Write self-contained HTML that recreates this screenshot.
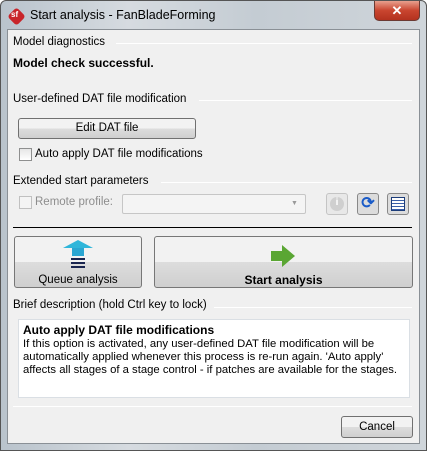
<!DOCTYPE html><html><head><style>
*{margin:0;padding:0;box-sizing:border-box}
body{width:427px;height:451px;overflow:hidden;font-family:"Liberation Sans",sans-serif;font-size:11.5px;color:#000;background:#fff}
.win{position:absolute;left:0;top:0;width:427px;height:451px;border:1px solid #555;border-radius:6px 6px 0 0;background:linear-gradient(to right,#b9c3cc,#d6dbe0 30%,#c4ccd3 60%,#cfd5da);}
.client{position:absolute;left:7px;top:29px;width:413px;height:415px;background:#f0f0f0;border:1px solid #8a9096}
.a{position:absolute;white-space:nowrap}
.line{position:absolute;height:1px;background:#a0a0a0;border-bottom:1px solid #fff}
.btn{position:absolute;border:1px solid #707070;border-radius:3px;background:linear-gradient(#f2f2f2 50%,#dddddd 50%,#cfcfcf);text-align:center}
.cb{position:absolute;width:13px;height:13px;border:1px solid #8e8f8f;background:linear-gradient(#e6e6e6,#fff)}
</style></head><body>
<div class="win">
<div class="a" style="transform:rotate(45deg);border-radius:3px;width:13px;height:13px;left:9px;top:9px;background:#c8252a"></div>
<div class="a" style="left:10px;top:9px;color:#fff;font-size:8px;font-weight:bold">sf</div>
<div class="a" style="left:29px;top:7px;font-size:12.5px">Start analysis - FanBladeForming</div>
<div class="a" style="left:373px;top:0;width:46px;height:20px;border:1px solid #6b3a33;border-top:none;border-radius:0 0 5px 5px;background:linear-gradient(#e8a08e,#c9452f 50%,#b3321f);color:#fff;font-weight:bold;font-size:13px;text-align:center;line-height:19px">✕</div>
</div>
<div class="client">
<div class="a" style="left:5px;top:6px">Model diagnostics</div>
<div class="line" style="left:108px;top:13px;width:296px"></div>
<div class="a" style="left:5px;top:26px;font-weight:bold;font-size:12px">Model check successful.</div>
<div class="a" style="left:5px;top:63px">User-defined DAT file modification</div>
<div class="line" style="left:191px;top:70px;width:213px"></div>
<div class="btn" style="left:10px;top:88px;width:178px;height:21px;line-height:19px">Edit DAT file</div>
<div class="cb" style="left:11px;top:118px"></div>
<div class="a" style="left:27px;top:118px">Auto apply DAT file modifications</div>
<div class="a" style="left:5px;top:145px">Extended start parameters</div>
<div class="line" style="left:153px;top:152px;width:251px"></div>
<div class="cb" style="left:11px;top:166px;border-color:#c0c0c0;background:#f4f4f4"></div>
<div class="a" style="left:27px;top:166px;color:#8d8d8d">Remote profile:</div>
<div class="a" style="left:114px;top:164px;width:184px;height:20px;border:1px solid #c6c6c6;border-radius:2px;background:#f4f4f4"></div>
<div class="a" style="left:283px;top:170px;color:#999;font-size:7px">▼</div>
<div class="a" style="left:318px;top:163px;width:22px;height:22px;border:1px solid #c4c4c4;border-radius:3px;background:#e8e8e8"><div style="margin:3px auto;width:14px;height:14px;border-radius:50%;background:#cfcfcf;color:#fff;font-size:10px;text-align:center;font-weight:bold">i</div></div>
<div class="a" style="left:349px;top:163px;width:22px;height:22px;border:1px solid #888;border-radius:3px;background:#dcdcdc;color:#1a5bc8;font-size:16px;text-align:center;line-height:20px;font-weight:bold">⟳</div>
<div class="a" style="left:379px;top:163px;width:22px;height:22px;border:1px solid #888;border-radius:3px;background:#dcdcdc"><div style="margin:3px;width:14px;height:14px;border:1px solid #1d3d7a;background:repeating-linear-gradient(#fff 0 2px,#3a5fa8 2px 3px)"></div></div>
<div class="a" style="left:5px;top:197px;width:399px;height:1px;background:#000"></div>
<div class="btn" style="left:6px;top:206px;width:128px;height:52px;border-color:#777">
 <div style="margin:3px auto 0;width:0;height:0;border-left:15px solid transparent;border-right:15px solid transparent;border-bottom:8px solid #2fb6da"></div>
 <div style="margin:0 auto;width:12px;height:8px;background:#2aa6d2"></div>
 <div style="margin:2px auto 0;width:14px;height:11px;background:repeating-linear-gradient(#1a2550 0 2px,transparent 2px 4px)"></div>
 <div style="position:absolute;left:0;right:0;top:37px">Queue analysis</div></div>
<div class="btn" style="left:146px;top:206px;width:259px;height:52px;border-color:#777">
 <div style="position:absolute;left:116px;top:14px;width:12px;height:10px;background:#5aa633"></div>
 <div style="position:absolute;left:127px;top:8px;width:0;height:0;border-top:11px solid transparent;border-bottom:11px solid transparent;border-left:13px solid #5aa633"></div>
 <div style="position:absolute;left:0;right:0;top:36px;font-weight:bold;font-size:12px">Start analysis</div></div>
<div class="a" style="left:5px;top:269px">Brief description (hold Ctrl key to lock)</div>
<div class="line" style="left:206px;top:277px;width:198px"></div>
<div class="a" style="left:10px;top:289px;width:392px;height:79px;background:#fff;border:1px solid #dadfe4;padding:4px 0 0 4px;line-height:13px;white-space:normal;font-size:11.3px">
<b style="font-size:12px">Auto apply DAT file modifications</b><br>If this option is activated, any user-defined DAT file modification will be automatically applied whenever this process is re-run again. 'Auto apply' affects all stages of a stage control - if patches are available for the stages.</div>
<div class="line" style="left:5px;top:376px;width:399px"></div>
<div class="btn" style="left:333px;top:386px;width:72px;height:22px;line-height:20px;border-radius:3px">Cancel</div>
</div>
</body></html>
